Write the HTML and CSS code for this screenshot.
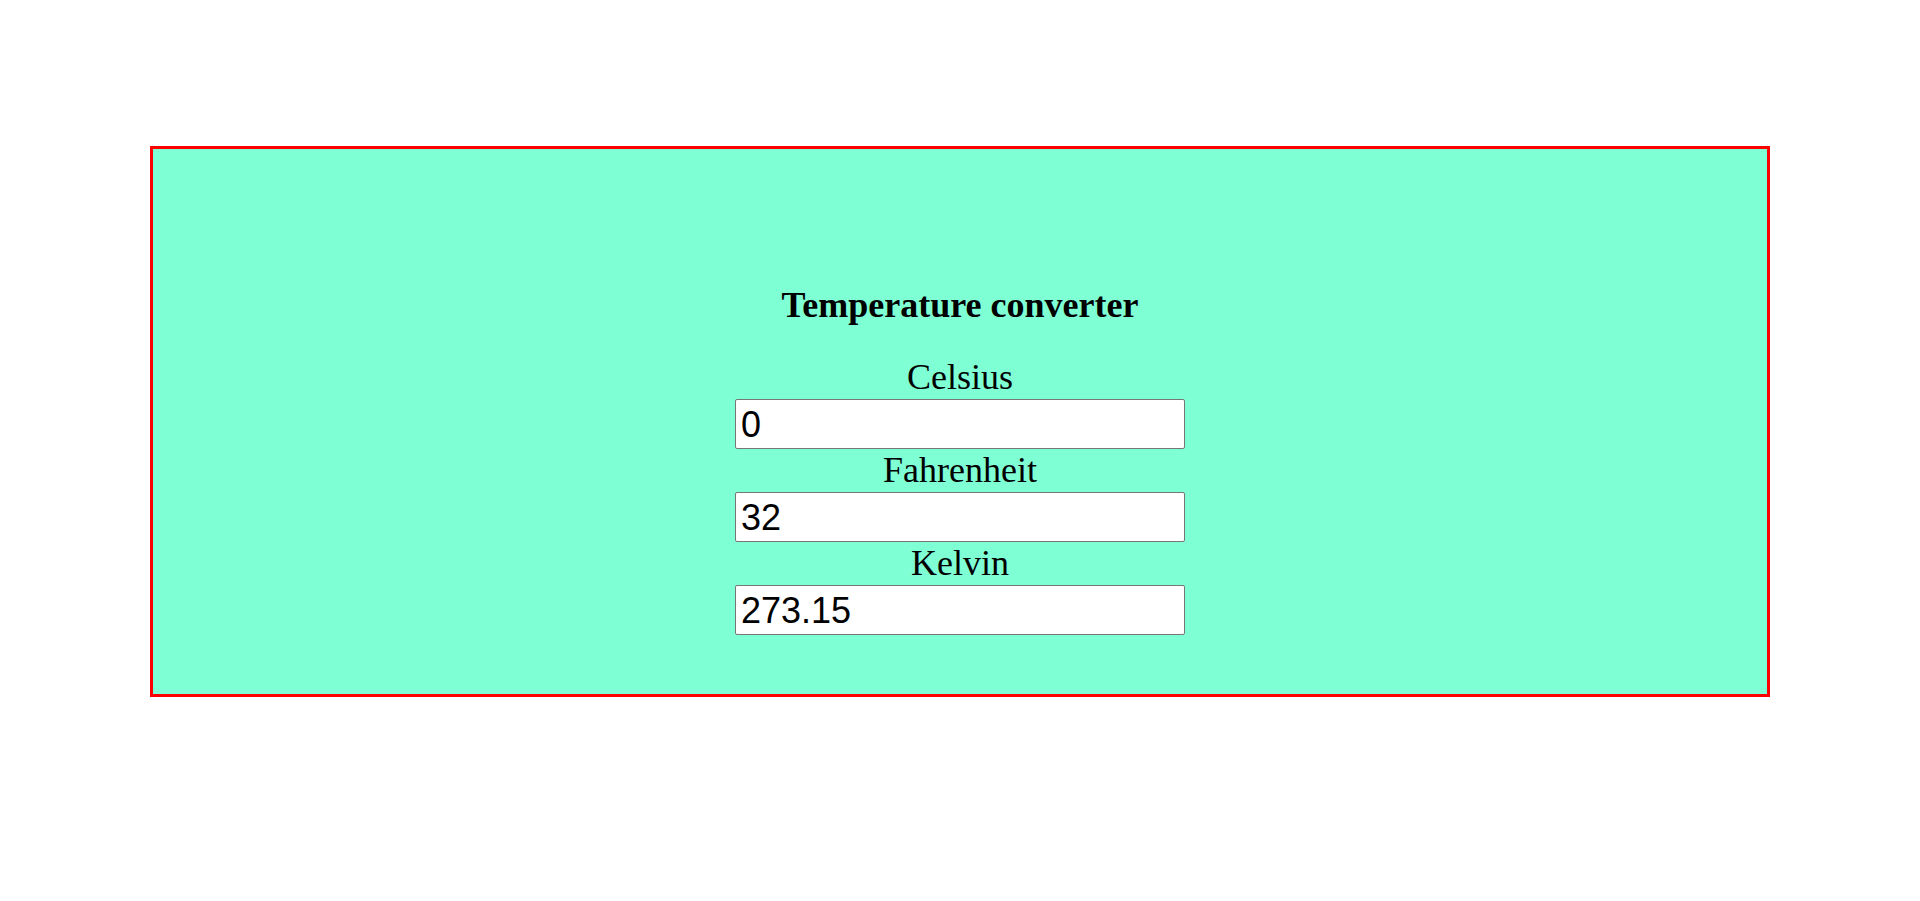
FILE: index.html
```html
<!DOCTYPE html>
<html>
<head>
<meta charset="utf-8">
<title>Temperature converter</title>
<link rel="stylesheet" href="styles.css">
</head>
<body>
<div class="converter">
  <h3 class="title">Temperature converter</h3>
  <div class="fields">
    <label class="label" for="c">Celsius</label>
    <input class="field" id="c" type="text" value="0">
    <label class="label" for="f">Fahrenheit</label>
    <input class="field" id="f" type="text" value="32">
    <label class="label" for="k">Kelvin</label>
    <input class="field" id="k" type="text" value="273.15">
  </div>
</div>
</body>
</html>
```

FILE: styles.css
```css
html, body {
  margin: 0;
  padding: 0;
  background: #ffffff;
}

body {
  font-family: "Liberation Serif", "Times New Roman", serif;
  color: #000;
}

.converter {
  margin: 146px 150px 0;
  border: 3px solid #ff0000;
  background: #7fffd4;
  padding: 135px 0 59px;
  display: flex;
  flex-direction: column;
  align-items: center;
}

.title {
  margin: 0 0 29px;
  font-size: 36px;
  line-height: 43px;
  font-weight: bold;
  text-align: center;
}

.fields {
  display: flex;
  flex-direction: column;
  align-items: center;
}

.label {
  display: block;
  font-size: 36px;
  line-height: 43px;
  height: 43px;
  text-align: center;
}

.field {
  box-sizing: border-box;
  width: 450px;
  height: 50px;
  margin: 0;
  padding: 3px 5px 1px;
  border: 1px solid #767676;
  border-radius: 2px;
  background: #fff;
  font-family: "Liberation Sans", Arial, sans-serif;
  font-size: 36px;
  color: #000;
}
```
